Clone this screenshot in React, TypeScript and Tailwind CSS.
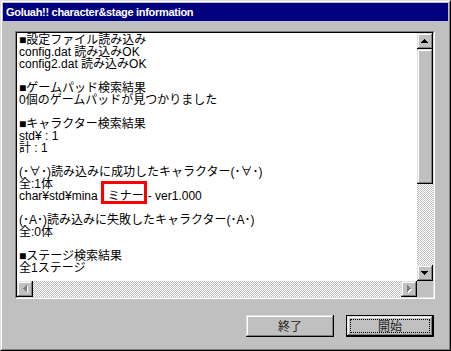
const raised =
  "bg-[#c0c0c0] shadow-[inset_-1px_-1px_#000,inset_1px_1px_#dfdfdf,inset_-2px_-2px_#808080,inset_2px_2px_#fff]";
const checker =
  "bg-[image:repeating-conic-gradient(#c0c0c0_0_25%,#ffffff_0_50%)] bg-[length:2px_2px]";

const lines: string[] = [
  "■設定ファイル読み込み",
  "config.dat 読み込みOK",
  "config2.dat 読み込みOK",
  "",
  "■ゲームパッド検索結果",
  "0個のゲームパッドが見つかりました",
  "",
  "■キャラクター検索結果",
  "std¥ : 1",
  "計 : 1",
  "",
  "(･∀･)読み込みに成功したキャラクター(･∀･)",
  "全:1体",
  "@char",
  "",
  "(･A･)読み込みに失敗したキャラクター(･A･)",
  "全:0体",
  "",
  "■ステージ検索結果",
  "全1ステージ",
];

function Arrow({ dir, disabled }: { dir: "up" | "down" | "left" | "right"; disabled?: boolean }) {
  const pts = {
    up: "3.5,0 7,4 0,4",
    down: "0,0 7,0 3.5,4",
    left: "4,0 4,7 0,3.5",
    right: "0,0 0,7 4,3.5",
  }[dir];
  const vertical = dir === "up" || dir === "down";
  const w = vertical ? 7 : 4;
  const h = vertical ? 4 : 7;
  return (
    <svg width={w + 1} height={h + 1} viewBox={`0 0 ${w + 1} ${h + 1}`} shapeRendering="crispEdges">
      {disabled && <polygon points={pts} transform="translate(1,1)" fill="#ffffff" />}
      <polygon points={pts} fill={disabled ? "#808080" : "#000000"} />
    </svg>
  );
}

function ScrollBtn({ dir, disabled }: { dir: "up" | "down" | "left" | "right"; disabled?: boolean }) {
  return (
    <div className={`w-[16px] h-[16px] shrink-0 flex items-center justify-center ${raised}`}>
      <Arrow dir={dir} disabled={disabled} />
    </div>
  );
}

function CharLine() {
  return (
    <div className="whitespace-pre h-[12px]">
      char¥std¥mina
      <span className="relative inline-block h-[12px] align-top ml-[10px]">
        ミナー
        <span className="absolute left-[-7px] top-[-9px] w-[46px] h-[23px] border-[3px] border-[#ff0000]" />
      </span>
      <span className="ml-[4px]">- ver1.000</span>
    </div>
  );
}

export default function App() {
  return (
    <div className="w-[451px] h-[351px] border border-t-[#dfdfdf] border-l-[#dfdfdf] border-r-black border-b-black font-['Liberation_Sans','Noto_Sans_CJK_JP',sans-serif]">
      <div className="w-full h-full border border-t-white border-l-white border-r-[#808080] border-b-[#808080] bg-[#c0c0c0] p-[1px]">
        {/* title bar */}
        <div className="h-[18px] bg-[#000080] text-white font-bold text-[11px] leading-[18px] pl-[3px] tracking-[-0.3px] font-['Liberation_Sans',sans-serif]">
          Goluah!! character&amp;stage information
        </div>

        <div className="pl-[12px] pt-[10px]">
          {/* list box */}
          <div className="w-[420px] h-[268px] border border-t-[#808080] border-l-[#808080] border-r-white border-b-white">
            <div className="w-full h-full border border-t-black border-l-black border-r-[#dfdfdf] border-b-[#dfdfdf] flex flex-col">
              <div className="flex flex-1 min-h-0">
                <div className="flex-1 bg-white overflow-hidden pl-[2px] pt-[1px] text-[12px] leading-[12px] text-black">
                  {lines.map((l, i) =>
                    l === "@char" ? (
                      <CharLine key={i} />
                    ) : (
                      <div key={i} className="whitespace-pre h-[12px]">
                        {l || "\u00a0"}
                      </div>
                    )
                  )}
                </div>
                {/* vertical scrollbar */}
                <div className="w-[16px] flex flex-col">
                  <ScrollBtn dir="up" />
                  <div className={`h-[135px] shrink-0 ${raised}`} />
                  <div className={`flex-1 ${checker}`} />
                  <ScrollBtn dir="down" />
                </div>
              </div>
              {/* horizontal scrollbar */}
              <div className="flex h-[16px]">
                <ScrollBtn dir="left" disabled />
                <div className={`flex-1 ${checker}`} />
                <ScrollBtn dir="right" disabled />
                <div className="w-[16px] bg-[#c0c0c0]" />
              </div>
            </div>
          </div>

          {/* buttons */}
          <div className="w-[420px] flex justify-end gap-[12px] pr-[1px] mt-[16px] text-[12px] font-['Noto_Sans_CJK_JP',sans-serif] text-[#222]">
            <div className={`w-[88px] h-[22px] flex items-center justify-center ${raised}`}>終了</div>
            <div className="w-[88px] h-[22px] border border-black">
              <div className={`w-full h-full p-[3px] ${raised}`}>
                <div className="w-full h-full border border-dotted border-black flex items-center justify-center">
                  開始
                </div>
              </div>
            </div>
          </div>
        </div>
      </div>
    </div>
  );
}
